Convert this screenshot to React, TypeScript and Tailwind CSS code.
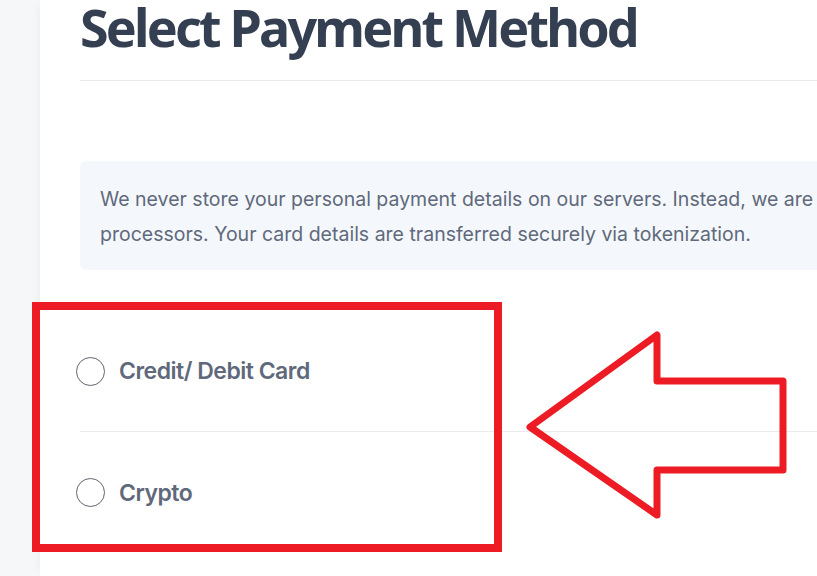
import React from 'react';

const methods = ['Credit/ Debit Card', 'Crypto'];

const App: React.FC = () => {
  return (
    <div className="relative flex h-[576px] w-[817px] overflow-hidden bg-white">
      {/* left rail */}
      <div className="w-[40px] shrink-0 bg-[#f6f7f9]" />

      <main className="flex-1 bg-white pl-[40px] shadow-[-6px_0_10px_-6px_rgba(0,0,0,0.06)]">
        <h1
          className="text-[52px] font-bold leading-[54px] tracking-[-2.8px] text-[#343f52]"
          style={{ fontFamily: '"Noto Sans", "Open Sans", sans-serif' }}
        >
          Select Payment Method
        </h1>
        <div className="mt-[26px] h-px w-[calc(100%+20px)] bg-[#e9eaed]" />

        <div
          className="mt-[80px] w-[760px] rounded-[6px] bg-[#f4f8fc] px-[20px] pb-[18px] pt-[21px] text-[19.5px] leading-[35px] text-[#60697b]"
          style={{ fontFamily: 'Inter, "Noto Sans", sans-serif' }}
        >
          <p className="whitespace-nowrap">
            We never store your personal payment details on our servers. Instead, we are
          </p>
          <p className="whitespace-nowrap">
            processors. Your card details are transferred securely via tokenization.
          </p>
        </div>

        <ul className="mt-[41px]" style={{ fontFamily: 'Inter, "Noto Sans", sans-serif' }}>
          {methods.map((m, i) => (
            <li
              key={m}
              className={`flex h-[121px] items-center gap-[14px] ${i === 0 ? 'border-b border-[#eaebee]' : ''}`}
            >
              <span className="-ml-[4px] h-[29px] w-[29px] shrink-0 rounded-full border-[1.5px] border-[#60656e] bg-white" />
              <span className="mt-[1px] text-[23px] font-semibold tracking-[-0.5px] text-[#60697b]">{m}</span>
            </li>
          ))}
        </ul>
      </main>

      {/* annotation overlay */}
      <svg className="pointer-events-none absolute left-0 top-0" width="817" height="576">
        <rect x="36" y="306" width="462" height="242" fill="none" stroke="#ed1c24" strokeWidth="8" />
        <polygon
          points="530,427 657,335 657,381 783,381 783,470 657,470 657,515"
          fill="none"
          stroke="#ed1c24"
          strokeWidth="7"
          strokeLinejoin="round"
        />
      </svg>
    </div>
  );
};

export default App;
